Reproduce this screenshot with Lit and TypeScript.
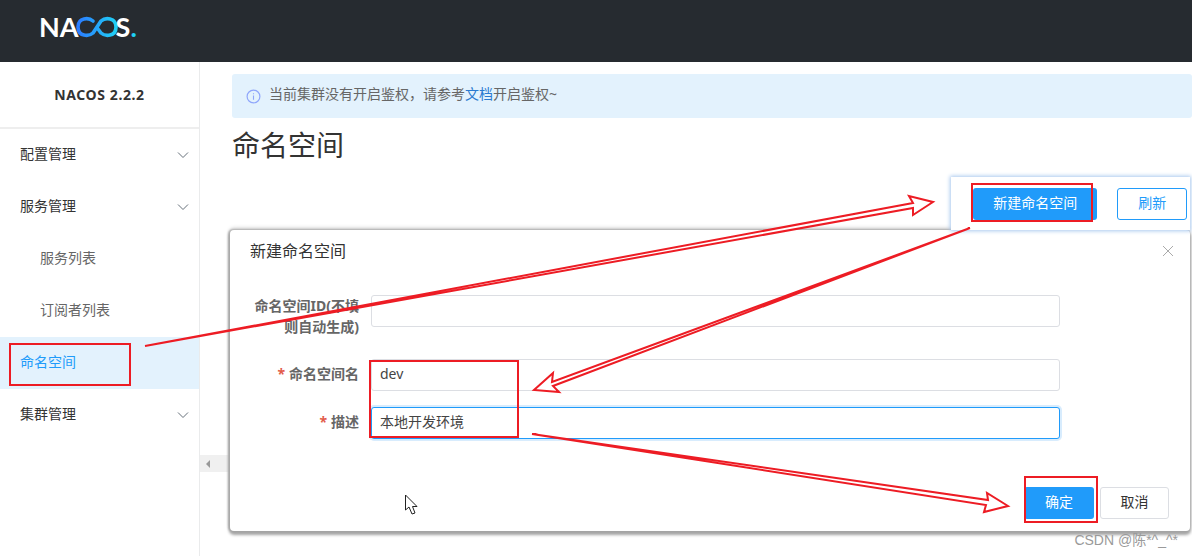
import { LitElement, html, css, svg } from "lit";
import { customElement } from "lit/decorators.js";

const chevron = html`<svg class="chev" width="12" height="8" viewBox="0 0 12 8"><path d="M1 1.5 L6 6.5 L11 1.5" fill="none" stroke="#66707a" stroke-width="1"/></svg>`;

@customElement("app-root")
export class AppRoot extends LitElement {
  static styles = css`
    :host {
      display: block; position: relative; width: 1192px; height: 556px; overflow: hidden; background: #fff;
      font-family: "Noto Sans", "Noto Sans CJK SC", sans-serif; font-size: 14px; color: #333;
    }
    .top { height: 62px; background: #262b30; display: flex; align-items: center; padding: 0 0 9px 39px; box-sizing: border-box; }
    .logo { display: flex; align-items: center; height: 36px; color: #fff; font-family: "Lato", sans-serif; font-size: 27px; font-weight: 700; line-height: 36px; }
    .logo svg { display: block; margin: 0 -2px 0 -3px; }
    .logo i { font-style: normal; color: #1fd0f5; }
    .wrap { display: flex; height: 494px; }
    aside { width: 200px; box-sizing: border-box; border-right: 1px solid #eaebec; flex: none; }
    .ver { height: 65px; border-bottom: 2px solid #eeeeee; display: flex; align-items: center; justify-content: center; font-weight: 700; font-size: 14px; letter-spacing: 0.6px; color: #333; }
    .item { height: 52px; box-sizing: border-box; display: flex; align-items: center; justify-content: space-between; padding: 0 10px 4px 20px; color: #333; }
    .item svg { margin-top: 4px; }
    .item.sub { padding-left: 40px; color: #666; }
    .item.on { background: #e3f2fd; color: #209bfa; }
    main { flex: 1; padding: 12px 0 0 32px; min-width: 0; }
    .alert { height: 44px; background: #e3f2fd; border-radius: 3px; display: flex; align-items: center; gap: 8px; padding-left: 14px; color: #666; }
    .alert a { color: #2a7ad0; }
    .alert p { margin: 0 0 5px; line-height: 20px; }
    h1 { margin: 6px 0 0; font-size: 28px; font-weight: 400; line-height: 42px; color: #333; }
    .tools { display: flex; justify-content: flex-end; margin: 11px 2px 0 0; }
    .panel { display: flex; align-items: center; height: 53px; width: 239px; box-sizing: border-box; background: #fff; padding: 0 3px 0 22px; gap: 20px; box-shadow: 0 0 4px 1px #a8c8ee; position: relative; z-index: 3; }
    button { font: inherit; height: 32px; border-radius: 3px; box-sizing: border-box; padding: 0 0 4px; cursor: pointer; }
    .pri { background: #209bfa; color: #fff; border: none; }
    .out { background: #fff; color: #209bfa; border: 1px solid #209bfa; }
    .new { width: 125px; }
    .refresh { width: 70px; }
    .scroll { margin: 225px 0 0 -32px; width: 40px; height: 17px; background: #f0f0f0; display: flex; align-items: center; padding-left: 6px; box-sizing: border-box; }
    .tri { width: 0; height: 0; border-style: solid; border-width: 4px 4px 4px 0; border-color: transparent #999 transparent transparent; }
    .dialog { position: absolute; left: 230px; top: 230px; width: 960px; height: 301px; background: #fff; border-radius: 4px; box-shadow: 0 3px 3px 1px #a4a4a4, -1px 0 2px 1px #b0b0b0, 0 -2px 4px #d4d4d4; z-index: 2; box-sizing: border-box; display: flex; flex-direction: column; }
    .dh { display: flex; justify-content: space-between; align-items: center; height: 44px; padding: 0 16px 4px 20px; box-sizing: border-box; font-size: 16px; color: #333; flex: none; }
    .dh svg { margin-top: 2px; }
    .form { padding-top: 21px; display: flex; flex-direction: column; gap: 16px; flex: 1; }
    .row { display: grid; grid-template-columns: 129px 689px; column-gap: 12px; align-items: start; }
    .row.tall { height: 48px; }
    .row label { text-align: right; font-weight: 700; color: #666; line-height: 21px; padding-top: 4px; }
    .row.tall label { padding: 0 0 0 20px; }
    .row label b { color: #e25b4a; font-weight: 700; margin-right: 4px; }
    .input { height: 32px; box-sizing: border-box; border: 1px solid #dcdee3; border-radius: 3px; padding: 0 8px; line-height: 27px; color: #444; background: #fff; }
    .input.focus { border-color: #209bfa; box-shadow: 0 0 0 2px #d8ecfd; }
    .df { display: flex; justify-content: flex-end; gap: 6px; padding: 0 21px 12px 0; }
    .ok { width: 70px; }
    .cancel { width: 69px; background: #fff; border: 1px solid #dcdee3; color: #333; }
    .ann { position: absolute; left: 0; top: 0; z-index: 5; pointer-events: none; }
    .mark { position: absolute; right: 14px; bottom: 6px; z-index: 6; color: #9a9a9a; font-family: "Liberation Sans", "Noto Sans CJK SC", sans-serif; font-size: 14px; line-height: 20px; }
  `;

  render() {
    return html`
      <div class="top">
        <div class="logo">
          <span>NA</span>
          <svg width="42" height="24" viewBox="74 15 42 24">
            <defs><linearGradient id="g" x1="0" x2="1" y1="0" y2="0"><stop offset="0" stop-color="#2b7cff"/><stop offset="1" stop-color="#1fd0f5"/></linearGradient></defs>
            <path d="M91 21 C87 17.5 76 17 76 27 C76 37 87 36.5 91 33 L99 21 C103 17.5 114 17 114 27 C114 37 103 36.5 99 33 L96 29" fill="none" stroke="url(#g)" stroke-width="3.6" stroke-linecap="round"/>
          </svg>
          <span>S<i>.</i></span>
        </div>
      </div>
      <div class="wrap">
        <aside>
          <div class="ver">NACOS 2.2.2</div>
          <div class="item">配置管理 ${chevron}</div>
          <div class="item">服务管理 ${chevron}</div>
          <div class="item sub">服务列表</div>
          <div class="item sub">订阅者列表</div>
          <div class="item on">命名空间</div>
          <div class="item">集群管理 ${chevron}</div>
        </aside>
        <main>
          <div class="alert">
            <svg width="15" height="15" viewBox="0 0 15 15"><circle cx="7.5" cy="7.5" r="6.4" fill="none" stroke="#8fa6fb" stroke-width="1.2"/><path d="M7.5 4.2 V5.2 M7.5 6.6 V10.8" stroke="#8fa6fb" stroke-width="1.1"/></svg>
            <p>当前集群没有开启鉴权，请参考<a>文档</a>开启鉴权~</p>
          </div>
          <h1>命名空间</h1>
          <div class="tools">
            <div class="panel">
              <button class="pri new">新建命名空间</button>
              <button class="out refresh">刷新</button>
            </div>
          </div>
          <div class="scroll"><span class="tri"></span></div>
        </main>
      </div>
      <div class="dialog">
        <div class="dh">
          <span>新建命名空间</span>
          <svg width="12" height="12" viewBox="0 0 12 12"><path d="M1 1 L11 11 M11 1 L1 11" stroke="#aaa" stroke-width="1"/></svg>
        </div>
        <div class="form">
          <div class="row tall"><label>命名空间ID(不填则自动生成)</label><div class="input"></div></div>
          <div class="row"><label><b>*</b>命名空间名</label><div class="input">dev</div></div>
          <div class="row"><label><b>*</b>描述</label><div class="input focus">本地开发环境</div></div>
        </div>
        <div class="df">
          <button class="pri ok">确定</button>
          <button class="cancel">取消</button>
        </div>
      </div>
      <svg class="ann" width="1192" height="556" viewBox="0 0 1192 556">
        ${svg`<g fill="none" stroke="#ed1c24" stroke-width="2">
          <rect x="10" y="344" width="120" height="41"/>
          <rect x="972" y="184" width="120" height="37"/>
          <rect x="370" y="361" width="148" height="76"/>
          <rect x="1025" y="477" width="72" height="45"/>
        </g>
        <g fill="#fff" stroke="#ed1c24" stroke-width="2" stroke-linejoin="miter">
          <polygon points="145,346 913,203 909,196 933,202 913,215 913,208"/>
          <polygon points="970,228 552,382 553,373 534,390 559,392 553,386"/>
          <polygon points="532,434 988,500 987,493 1008,506 984,512 986,505"/>
        </g>
        <polygon points="405.5,495 405.5,510 409,507 412,514 415,513 412.5,506.5 417,506.5" fill="#fff" stroke="#222" stroke-width="1"/>`}
      </svg>
      <div class="mark">CSDN @陈*^_^*</div>
    `;
  }
}
